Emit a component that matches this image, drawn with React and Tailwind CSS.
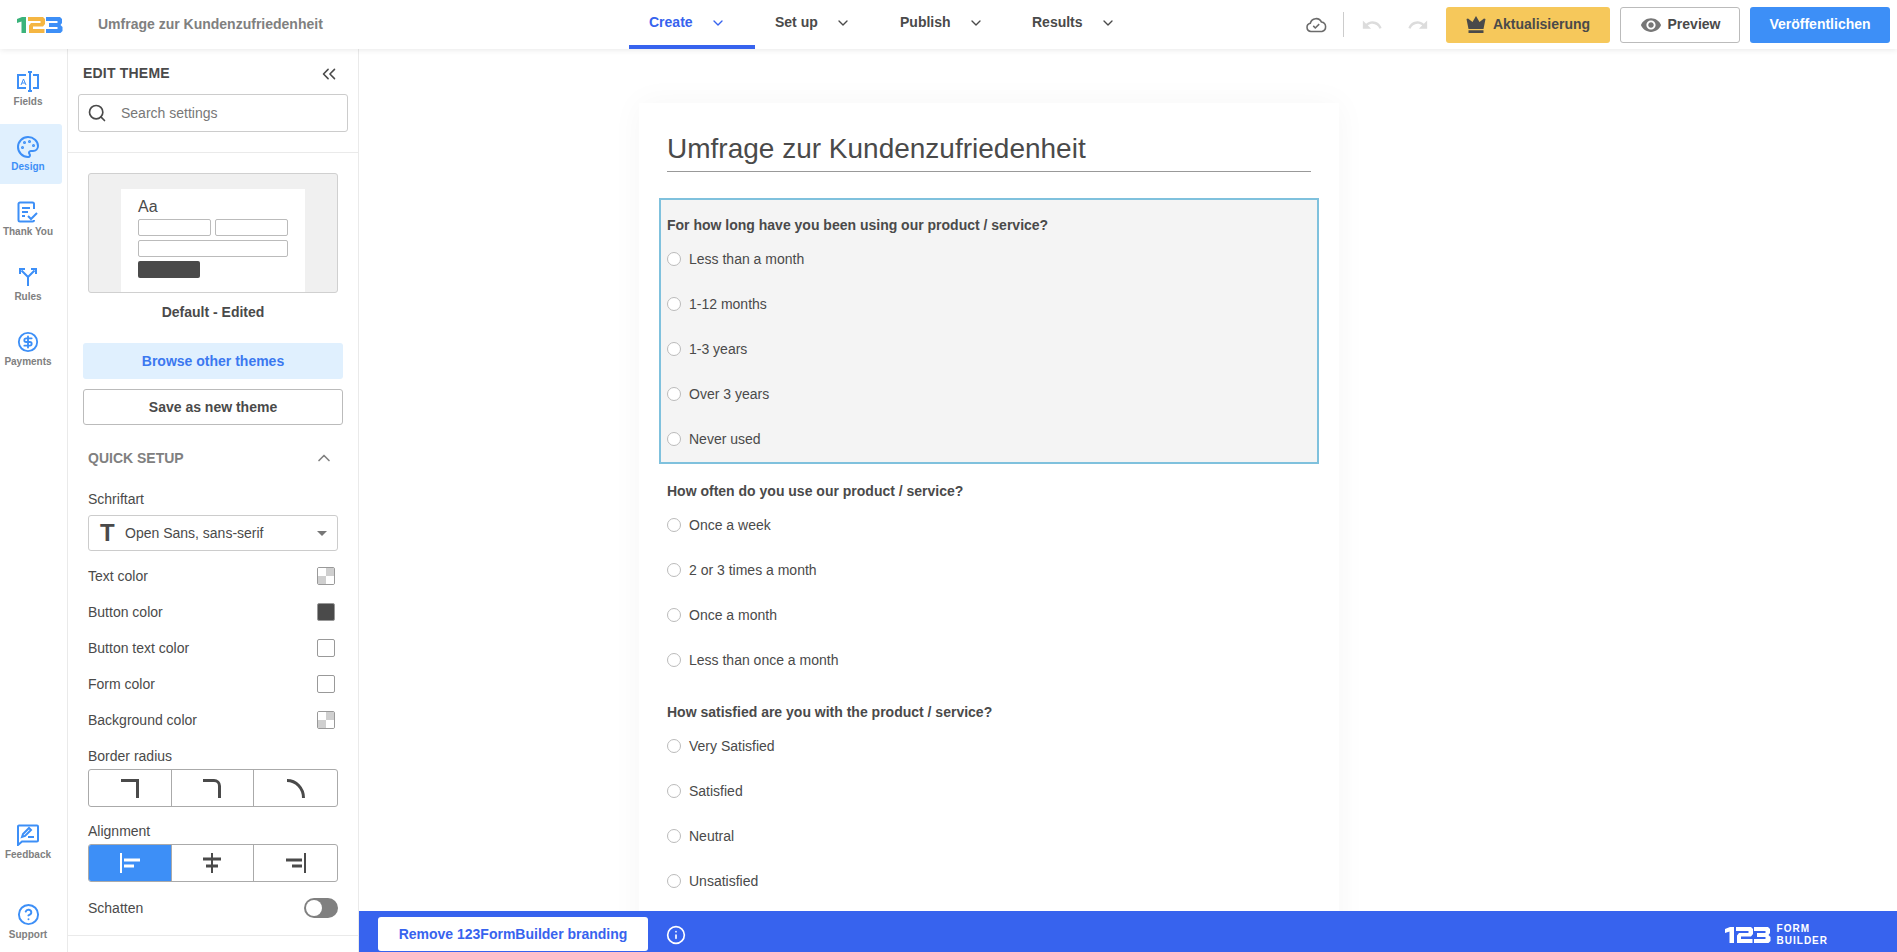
import React from "react";
import { ChevronDown, ChevronUp, ChevronsLeft, Search, Info, CircleDollarSign, CircleHelp, Palette } from "lucide-react";

const F = "[font-family:'Liberation_Sans',Arial,sans-serif]";

function Logo123({ white }) {
  const c1 = white ? "#fff" : "#3bb37b";
  const c2 = white ? "#fff" : "#f5b642";
  const c3 = white ? "#fff" : "#3d8ff7";
  return (
    <svg width="46" height="18" viewBox="0 0 46 18">
      <path d="M0 3 L5 1 H9 V17 H4.5 V5.5 L0 7 Z" fill={c1} />
      <path d="M11 1 H26 L28 3 V8 L26 10.5 H16 V13 H27.5 V17 H12 V9.5 L14 7 H23.5 V5 H11 Z" fill={c2} />
      <path d="M29 1 H43 L45 3 V7 L43.5 9 L45.5 11 V15 L43.5 17 H29 V13 H40.5 V11 H32 V7 H40.5 V5 H29 Z" fill={c3} />
    </svg>
  );
}

function NavTab({ label, active, w }) {
  return (
    <div className={`${w} h-[49px] pl-[20px] flex items-center gap-[17px] border-b-4 ${active ? "border-[#3763ee] text-[#3763ee]" : "border-transparent text-[#4a4a4a]"}`}>
      <span className="text-[14px] font-bold">{label}</span>
      <ChevronDown size={16} strokeWidth={2} />
    </div>
  );
}

function RailItem({ icon, label, active, className = "" }) {
  return (
    <div className={`w-[62px] h-[60px] pr-[6px] flex flex-col items-center justify-center rounded-r-[3px] ${active ? "bg-[#e0f0fe] text-[#3d8ff7]" : "text-[#808080]"} ${className}`}>
      <div className="h-[24px] flex items-center text-[#3d8ff7]">{icon}</div>
      <span className="text-[10px] font-bold mt-[1px] leading-[14px] whitespace-nowrap">{label}</span>
    </div>
  );
}

const FieldsIcon = (
  <svg width="24" height="24" viewBox="0 0 24 24" fill="none" stroke="currentColor" strokeWidth="2">
    <path d="M10 5H2v13h8M17 5h5v13h-5" />
    <path d="M12 2h4M12 21h4M14 2v19" />
    <path d="M5 15l2.5-6L10 15M6 13h3" strokeWidth="1" />
  </svg>
);
const ThankIcon = (
  <svg width="22" height="22" viewBox="0 0 22 22" fill="none" stroke="currentColor" strokeWidth="2">
    <path d="M17 8V3a1.5 1.5 0 0 0-1.500-1.500H3A1.500 1.500 0 0 0 1.500 3v16A1.500 1.500 0 0 0 3 20.500h12.500A1.500 1.500 0 0 0 17 19" />
    <path d="M5 7h8M5 11h6M5 15h3" />
    <path d="M11 15l3 3 6-6" />
  </svg>
);
const RulesIcon = (
  <svg width="18" height="20" viewBox="0 0 18 20" fill="none" stroke="currentColor" strokeWidth="2">
    <path d="M9 19v-9L2.500 3.500M9 10l6.500-6.500" />
    <path d="M1 7V2h5M17 7V2h-5" strokeWidth="2" />
  </svg>
);
const FeedbackIcon = (
  <svg width="22" height="22" viewBox="0 0 22 22" fill="none">
    <path d="M2 1.500h18a1 1 0 0 1 1 1v14a1 1 0 0 1-1 1H5l-4 3.500V2.500a1 1 0 0 1 1-1z" stroke="currentColor" strokeWidth="2" />
    <path d="M5 13l1-3 6-6 2 2-6 6zM11 13h6" stroke="currentColor" strokeWidth="2" />
  </svg>
);

function Checker() {
  return (
    <div className="w-[18px] h-[18px] border border-[#999] rounded-[2px] grid grid-cols-2 grid-rows-2 overflow-hidden bg-white">
      <div className="bg-white" />
      <div className="bg-[#cfcfcf]" />
      <div className="bg-[#cfcfcf]" />
      <div className="bg-white" />
    </div>
  );
}

function ColorRow({ label, swatch }) {
  return (
    <div className="h-[36px] flex items-center justify-between pr-[3px] text-[14px] text-[#4a4a4a]">
      <span>{label}</span>
      {swatch}
    </div>
  );
}

const Plain = <div className="w-[18px] h-[18px] border border-[#999] rounded-[2px] bg-white" />;
const Dark = <div className="w-[18px] h-[18px] border border-[#999] rounded-[2px] bg-[#4a4a4a]" />;

function Segmented({ children }) {
  return <div className="h-[38px] grid grid-cols-3 border border-[#aaa] rounded-[3px] overflow-hidden divide-x divide-[#aaa]">{children}</div>;
}

function Option({ label, last }) {
  return (
    <div className={`flex items-center h-[20px] ${last ? "" : "mb-[25px]"}`}>
      <span className="w-[14px] h-[14px] rounded-full border border-[#bbb] bg-white mr-[8px] shrink-0" />
      <span className="text-[14px] text-[#4a4a4a]">{label}</span>
    </div>
  );
}

function Question({ title, options, selected, className = "" }) {
  return (
    <div className={`${selected ? "border-2 border-[#7fc1dd] bg-[#f4f4f4] h-[266px] pt-[15px] -ml-[8px] -mr-[8px] pl-[6px] pr-[5px]" : "pt-[16px]"} ${className}`}>
      <div className="text-[14px] font-bold text-[#4a4a4a] leading-[20px] mb-[14px]">{title}</div>
      {options.map((o, i) => <Option key={o} label={o} last={i === options.length - 1} />)}
    </div>
  );
}

export default function App() {
  return (
    <div className={`${F} w-[1897px] h-[952px] overflow-hidden bg-white flex flex-col relative`}>
      <header className="h-[49px] shrink-0 flex items-center relative z-10 bg-white shadow-[0_1px_6px_rgba(0,0,0,0.09)]">
        <div className="w-[98px] pl-[17px] flex items-center"><Logo123 /></div>
        <div className="text-[14px] font-bold text-[#808080] whitespace-nowrap">Umfrage zur Kundenzufriedenheit</div>
        <nav className="absolute left-[629px] top-0 flex">
          <NavTab label="Create" active w="w-[126px]" />
          <NavTab label="Set up" w="w-[125px]" />
          <NavTab label="Publish" w="w-[132px]" />
          <NavTab label="Results" w="w-[136px]" />
        </nav>
        <div className="ml-auto flex items-center pr-[7px]">
          <svg width="22" height="22" viewBox="0 0 24 24" fill="none" stroke="#6b6b6b" strokeWidth="1.700">
            <path d="M6.500 19a4.500 4.500 0 0 1-.7-8.900A6.500 6.500 0 0 1 18 8.800a5.200 5.200 0 0 1 .5 10.200z" />
            <path d="M9 13l2.200 2.200L15.500 11" />
          </svg>
          <div className="w-px h-[25px] bg-[#ccc] ml-[16px] mr-[17px]" />
          <svg width="22" height="22" viewBox="0 0 24 24" fill="#dcdcdc"><path d="M12.500 8c-2.650 0-5.050.99-6.900 2.600L2 7v9h9l-3.620-3.620c1.390-1.160 3.160-1.880 5.120-1.880 3.540 0 6.550 2.310 7.600 5.500l2.370-.78C21.080 11.030 17.150 8 12.500 8z" /></svg>
          <svg width="22" height="22" viewBox="0 0 24 24" fill="#dcdcdc" className="ml-[24px]"><path d="M18.400 10.600C16.550 8.990 14.150 8 11.500 8c-4.650 0-8.580 3.030-9.960 7.220L3.900 16c1.050-3.190 4.050-5.500 7.600-5.500 1.950 0 3.730.72 5.120 1.880L13 16h9V7l-3.600 3.600z" /></svg>
          <button className="ml-[17px] w-[164px] h-[36px] rounded-[3px] bg-[#f6c85b] flex items-center justify-center gap-[7px] text-[14px] font-bold text-[#4a4a4a]">
            <svg width="20" height="17" viewBox="0 0 20 17" fill="#4a4a4a"><path d="M10 0l3.500 6L18 2.500 19.500 3 17.500 13h-15L.5 3 2 2.500 6.500 6zM2.500 14.300h15V17h-15z" /></svg>
            Aktualisierung
          </button>
          <button className="ml-[10px] w-[120px] h-[36px] rounded-[3px] border border-[#bbb] bg-white flex items-center justify-center gap-[6px] text-[14px] font-bold text-[#4a4a4a]">
            <svg width="22" height="22" viewBox="0 0 24 24" fill="#777"><path fillRule="evenodd" d="M12 4.500C7 4.500 2.730 7.610 1 12c1.730 4.390 6 7.500 11 7.500s9.270-3.110 11-7.500c-1.730-4.390-6-7.500-11-7.500zM12 17c-2.760 0-5-2.240-5-5s2.240-5 5-5 5 2.240 5 5-2.240 5-5 5zm0-8c-1.660 0-3 1.340-3 3s1.340 3 3 3 3-1.340 3-3-1.340-3-3-3z" /></svg>
            Preview
          </button>
          <button className="ml-[10px] w-[140px] h-[36px] rounded-[3px] bg-[#3d8ff7] flex items-center justify-center text-[14px] font-bold text-white">Veröffentlichen</button>
        </div>
      </header>

      <div className="flex-1 flex min-h-0">
        <aside className="w-[68px] shrink-0 border-r border-[#eaeaea] flex flex-col pt-[10px] items-start">
          <RailItem icon={FieldsIcon} label="Fields" />
          <RailItem icon={<Palette size={24} strokeWidth={2} />} label="Design" active className="mt-[5px]" />
          <RailItem icon={ThankIcon} label="Thank You" className="mt-[5px]" />
          <RailItem icon={RulesIcon} label="Rules" className="mt-[5px]" />
          <RailItem icon={<CircleDollarSign size={22} strokeWidth={2} />} label="Payments" className="mt-[5px]" />
          <RailItem icon={FeedbackIcon} label="Feedback" className="mt-auto" />
          <RailItem icon={<CircleHelp size={23} strokeWidth={2} />} label="Support" className="mt-[20px]" />
        </aside>

        <aside className="w-[291px] shrink-0 border-r border-[#eaeaea] flex flex-col">
          <div className="h-[104px] border-b border-[#eaeaea] px-[10px] shrink-0">
            <div className="h-[45px] pt-[4px] pl-[5px] pr-[8px] flex items-center justify-between">
              <span className="text-[14px] font-bold tracking-[0.2px] text-[#4a4a4a]">EDIT THEME</span>
              <ChevronsLeft size={22} strokeWidth={1.700} className="text-[#4a4a4a]" />
            </div>
            <div className="w-[270px] h-[38px] border border-[#ccc] rounded-[3px] flex items-center pl-[8px] text-[14px] text-[#777]">
              <Search size={20} strokeWidth={2} className="text-[#4a4a4a] mr-[14px]" />
              Search settings
            </div>
          </div>

          <div className="px-[20px] pt-[20px]">
            <div className="h-[120px] border border-[#d0d0d0] rounded-[3px] bg-[#f0f0f0] flex justify-center">
              <div className="w-[184px] bg-white mt-[15px] px-[17px] pt-[8px]">
                <div className="text-[16px] leading-[20px] text-[#4a4a4a]">Aa</div>
                <div className="flex gap-[4px] mt-[2px]">
                  <div className="w-[73px] h-[17px] border border-[#bbb] rounded-[2px]" />
                  <div className="w-[73px] h-[17px] border border-[#bbb] rounded-[2px]" />
                </div>
                <div className="w-[150px] h-[17px] border border-[#bbb] rounded-[2px] mt-[4px]" />
                <div className="w-[62px] h-[17px] bg-[#4a4a4a] rounded-[2px] mt-[4px]" />
              </div>
            </div>
            <div className="text-center text-[14px] font-bold text-[#4a4a4a] mt-[9px] leading-[20px]">Default - Edited</div>
          </div>

          <div className="pl-[15px] mt-[21px]">
            <div className="w-[260px] h-[36px] rounded-[3px] bg-[#e0f0fe] flex items-center justify-center text-[14px] font-bold text-[#3b78f0]">Browse other themes</div>
            <div className="w-[260px] h-[36px] rounded-[3px] border border-[#bbb] mt-[10px] flex items-center justify-center text-[14px] font-bold text-[#4a4a4a]">Save as new theme</div>
          </div>

          <div className="px-[20px]">
            <div className="h-[32px] mt-[17px] flex items-center justify-between pr-[4px]">
              <span className="text-[14px] font-bold text-[#808080]">QUICK SETUP</span>
              <ChevronUp size={20} strokeWidth={2} className="text-[#808080]" />
            </div>
            <div className="text-[14px] text-[#4a4a4a] mt-[15px] leading-[20px]">Schriftart</div>
            <div className="h-[36px] mt-[6px] border border-[#ccc] rounded-[3px] flex items-center pl-[11px] pr-[10px] text-[14px] text-[#4a4a4a]">
              <span className="text-[24px] font-bold leading-none w-[25px]">T</span>
              <span>Open Sans, sans-serif</span>
              <span className="ml-auto w-0 h-0 border-x-[5px] border-x-transparent border-t-[5px] border-t-[#777]" />
            </div>
            <div className="mt-[7px]">
              <ColorRow label="Text color" swatch={<Checker />} />
              <ColorRow label="Button color" swatch={Dark} />
              <ColorRow label="Button text color" swatch={Plain} />
              <ColorRow label="Form color" swatch={Plain} />
              <ColorRow label="Background color" swatch={<Checker />} />
            </div>
            <div className="text-[14px] text-[#4a4a4a] mt-[8px] leading-[20px]">Border radius</div>
            <div className="mt-[3px]">
              <Segmented>
                {["M0 1.500h16.500V19", "M0 1.500h11a5.500 5.500 0 0 1 5.500 5.500V19", "M0 1.500c9 0 16.500 7.500 16.500 17.500"].map((d) => (
                  <div key={d} className="flex items-center justify-center">
                    <svg width="18" height="19" viewBox="0 0 18 19" fill="none" stroke="#4a4a4a" strokeWidth="3"><path d={d} /></svg>
                  </div>
                ))}
              </Segmented>
            </div>
            <div className="text-[14px] text-[#4a4a4a] mt-[14px] leading-[20px]">Alignment</div>
            <div className="mt-[3px]">
              <Segmented>
                <div className="flex items-center justify-center bg-[#3d8ff7]">
                  <svg width="20" height="20" viewBox="0 0 20 20" fill="none" stroke="#fff"><path d="M1 0v20" strokeWidth="2" /><path d="M4 7h16M4 13h10" strokeWidth="3" /></svg>
                </div>
                <div className="flex items-center justify-center">
                  <svg width="18" height="20" viewBox="0 0 18 20" fill="none" stroke="#4a4a4a"><path d="M9 0v20" strokeWidth="2" /><path d="M0 6h18M3 13h12" strokeWidth="3" /></svg>
                </div>
                <div className="flex items-center justify-center">
                  <svg width="20" height="20" viewBox="0 0 20 20" fill="none" stroke="#4a4a4a"><path d="M19 0v20" strokeWidth="2" /><path d="M0 7h16M6 13h10" strokeWidth="3" /></svg>
                </div>
              </Segmented>
            </div>
            <div className="h-[30px] mt-[11px] flex items-center justify-between text-[14px] text-[#4a4a4a]">
              <span>Schatten</span>
              <div className="w-[34px] h-[20px] rounded-full bg-[#808080] p-[2px]">
                <div className="w-[16px] h-[16px] rounded-full bg-white" />
              </div>
            </div>
          </div>
          <div className="border-t border-[#eaeaea] mt-[12px]" />
        </aside>

        <main className="flex-1 min-w-0 flex flex-col">
          <div className="flex-1 min-h-0 overflow-hidden flex justify-start pl-[280px]">
            <div className="w-[700px] h-[900px] mt-[54px] bg-white shadow-[0_0_30px_rgba(0,0,0,0.04)] px-[28px] shrink-0">
              <div className="h-[69px] border-b border-[#999] flex items-end pb-[2px] w-[644px]">
                <h1 className="text-[28px] leading-[40px] text-[#4a4a4a]">Umfrage zur Kundenzufriedenheit</h1>
              </div>
              <div className="w-[644px] mt-[26px]">
                <Question selected title="For how long have you been using our product / service?" options={["Less than a month", "1-12 months", "1-3 years", "Over 3 years", "Never used"]} />
                <Question className="mt-[1px]" title="How often do you use our product / service?" options={["Once a week", "2 or 3 times a month", "Once a month", "Less than once a month"]} />
                <Question className="mt-[16px]" title="How satisfied are you with the product / service?" options={["Very Satisfied", "Satisfied", "Neutral", "Unsatisfied"]} />
              </div>
            </div>
          </div>
          <div className="h-[41px] shrink-0 bg-[#3763ee] flex items-start pt-[6px] pl-[19px] pr-[69px] relative z-10">
            <button className="w-[270px] h-[34px] bg-white rounded-[3px] text-[14px] font-bold text-[#3763ee]">Remove 123FormBuilder branding</button>
            <Info size={20} strokeWidth={2} className="text-white ml-[18px] mt-[8px]" />
            <div className="ml-auto flex items-center gap-[6px] mt-[6px]">
              <Logo123 white />
              <div className="text-[10px] leading-[12px] tracking-[1px] font-bold text-white">FORM<br />BUILDER</div>
            </div>
          </div>
        </main>
      </div>
    </div>
  );
}
